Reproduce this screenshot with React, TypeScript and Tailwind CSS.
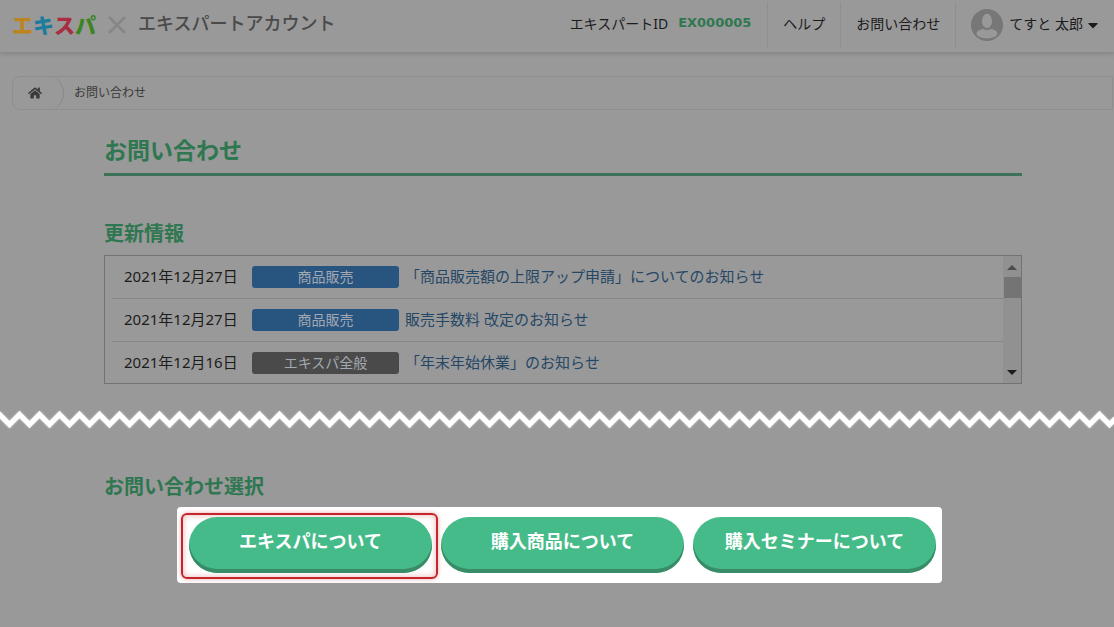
import { FaHome, FaCaretDown } from "react-icons/fa";

type News = { date: string; tag: string; tone: "blue" | "gray"; title: string };

const news: News[] = [
  { date: "2021年12月27日", tag: "商品販売", tone: "blue", title: "「商品販売額の上限アップ申請」についてのお知らせ" },
  { date: "2021年12月27日", tag: "商品販売", tone: "blue", title: "販売手数料 改定のお知らせ" },
  { date: "2021年12月16日", tag: "エキスパ全般", tone: "gray", title: "「年末年始休業」のお知らせ" },
];

const navCell = "flex h-[46px] items-center border-l border-[#8f8f8f] px-[15px]";

function Header() {
  return (
    <header className="flex h-[53px] items-center justify-between border-b border-[#8c8c8c] pb-0.5 pl-3 shadow-[0_1px_4px_rgba(0,0,0,0.15)]">
      <div className="flex items-center">
        <a href="#" className="flex text-[21px] font-black leading-8">
          <span className="text-[#bd8420]">エ</span>
          <span className="text-[#1d7c9b]">キ</span>
          <span className="text-[#a92c41]">ス</span>
          <span className="text-[#3c8420]">パ</span>
        </a>
        <svg className="mx-3 h-[18px] w-[18px]" viewBox="0 0 18 18" fill="none" stroke="#868686" strokeWidth="2.6" aria-hidden="true">
          <path d="M1 1L17 17M17 1L1 17" />
        </svg>
        <span className="pb-1 text-[18px] font-medium leading-8 text-[#4a4a4a]">エキスパートアカウント</span>
      </div>
      <nav className="flex items-center text-[14px] text-[#1c1c1c]">
        <div className="flex items-center gap-2.5 pb-1 pr-4">
          <span>エキスパートID</span>
          <span className="font-['DejaVu_Sans'] text-[13px] font-bold text-[#2f7750]">EX000005</span>
        </div>
        <a href="#" className={navCell}><span className="pb-1">ヘルプ</span></a>
        <a href="#" className={navCell}><span className="pb-1">お問い合わせ</span></a>
        <button type="button" className={navCell}>
          <svg className="mr-1.5 h-8 w-8" viewBox="0 0 32 32" aria-hidden="true">
            <circle cx="16" cy="16" r="16" fill="#777777" />
            <ellipse cx="16" cy="24.5" rx="10.5" ry="5" fill="#999999" />
            <ellipse cx="16" cy="12.500" rx="6.500" ry="8.800" fill="#777777" />
            <ellipse cx="16" cy="12" rx="5" ry="7.2" fill="#999999" />
          </svg>
          <span className="pb-1">てすと 太郎</span>
          <FaCaretDown className="ml-1 h-4 w-3" aria-hidden="true" />
        </button>
      </nav>
    </header>
  );
}

function Breadcrumb() {
  return (
    <nav aria-label="パンくず" className="ml-3 mr-px mt-[23px] flex h-[34px] items-center overflow-hidden rounded-l-lg border border-[#8e8e8e] text-[12px] text-[#3a3a3a]">
      <a href="#" aria-label="ホーム" className="flex h-9 w-[51px] items-center rounded-r-[18px] border-r border-[#878787] pl-[15px]">
        <FaHome className="h-3.5 w-3.5" />
      </a>
      <span className="pl-2.5">お問い合わせ</span>
    </nav>
  );
}

function NewsBox() {
  return (
    <div className="mt-[7px] flex h-[129px] border border-[#737373]">
      <ul className="min-w-0 flex-1 overflow-hidden pl-[7px]">
        {news.map((n, i) => (
          <li key={i} className="flex h-[43px] items-center border-b border-[#868686] pl-3 text-[15px]">
            <time className="w-32 shrink-0 pb-0.5 text-[#1c1c1c]">{n.date}</time>
            <span
              className={
                "mr-1.5 h-[22px] w-[147px] shrink-0 rounded-[3px] text-center text-[14px] leading-[22px] text-[#a3a9b0] " +
                (n.tone === "blue" ? "bg-[#285480]" : "bg-[#4a4a4a]")
              }
            >
              {n.tag}
            </span>
            <a href="#" className="truncate pb-0.5 text-[#254766]">{n.title}</a>
          </li>
        ))}
      </ul>
      <div className="flex w-[18px] flex-col items-center bg-[#919191]" aria-hidden="true">
        <svg className="h-[21px] w-[10px]" viewBox="0 0 10 21"><path d="M0 14L5 9L10 14Z" fill="#4d4d4d" /></svg>
        <div className="h-[21px] w-full border-l border-[#919191] bg-[#747474]" />
        <div className="flex-1" />
        <svg className="h-[21px] w-[10px]" viewBox="0 0 10 21"><path d="M0 8L5 13L10 8Z" fill="#1c1c1c" /></svg>
      </div>
    </div>
  );
}

function ZigZag() {
  return (
    <svg className="mt-6 block h-[22px] w-full drop-shadow-[0_0_1px_rgba(255,255,255,0.5)]" aria-hidden="true">
      <defs>
        <pattern id="zigzag" width="20" height="22" patternUnits="userSpaceOnUse">
          <path d="M-10.500 16.500L-0.500 6.500L9.500 16.500L19.500 6.500L29.500 16.500" fill="none" stroke="#ffffff" strokeWidth="5.2" />
        </pattern>
      </defs>
      <rect width="100%" height="22" fill="url(#zigzag)" />
    </svg>
  );
}

function PillButton({ label }: { label: string }) {
  return (
    <button type="button" className="h-14 w-[243px] rounded-full bg-[#46bb8a] pb-2 text-[18px] font-bold text-white shadow-[inset_0_-4px_0_#388c68]">
      {label}
    </button>
  );
}

export default function App() {
  return (
    <div className="min-h-screen bg-[#999999] font-['Noto_Sans','Noto_Sans_CJK_JP',sans-serif]">
      <Header />
      <Breadcrumb />
      <main>
        <section className="pl-26 pr-23 pt-6">
          <h1 className="border-b-[3px] border-[#3c7257] pb-[7px] text-[23px] font-bold leading-8 text-[#2f7750]">お問い合わせ</h1>
          <h2 className="mt-11 text-[20px] font-bold leading-7 text-[#2f7750]">更新情報</h2>
          <NewsBox />
        </section>
        <ZigZag />
        <section className="pl-26 pr-23 pt-[43px]">
          <h2 className="text-[20px] font-bold leading-7 text-[#2f7750]">お問い合わせ選択</h2>
          <div className="ml-[73px] mt-1.5 flex w-fit gap-[9px] rounded bg-white py-2.5 pl-3 pr-1.5">
            <div className="relative">
              <div className="absolute -bottom-1.5 -left-2 -right-1.5 -top-1 rounded-md border-2 border-[#c4262b] shadow-[0_0_4px_rgba(196,38,43,0.4),inset_0_0_6px_rgba(196,38,43,0.35)]" />
              <div className="relative">
                <PillButton label="エキスパについて" />
              </div>
            </div>
            <PillButton label="購入商品について" />
            <PillButton label="購入セミナーについて" />
          </div>
        </section>
      </main>
    </div>
  );
}
